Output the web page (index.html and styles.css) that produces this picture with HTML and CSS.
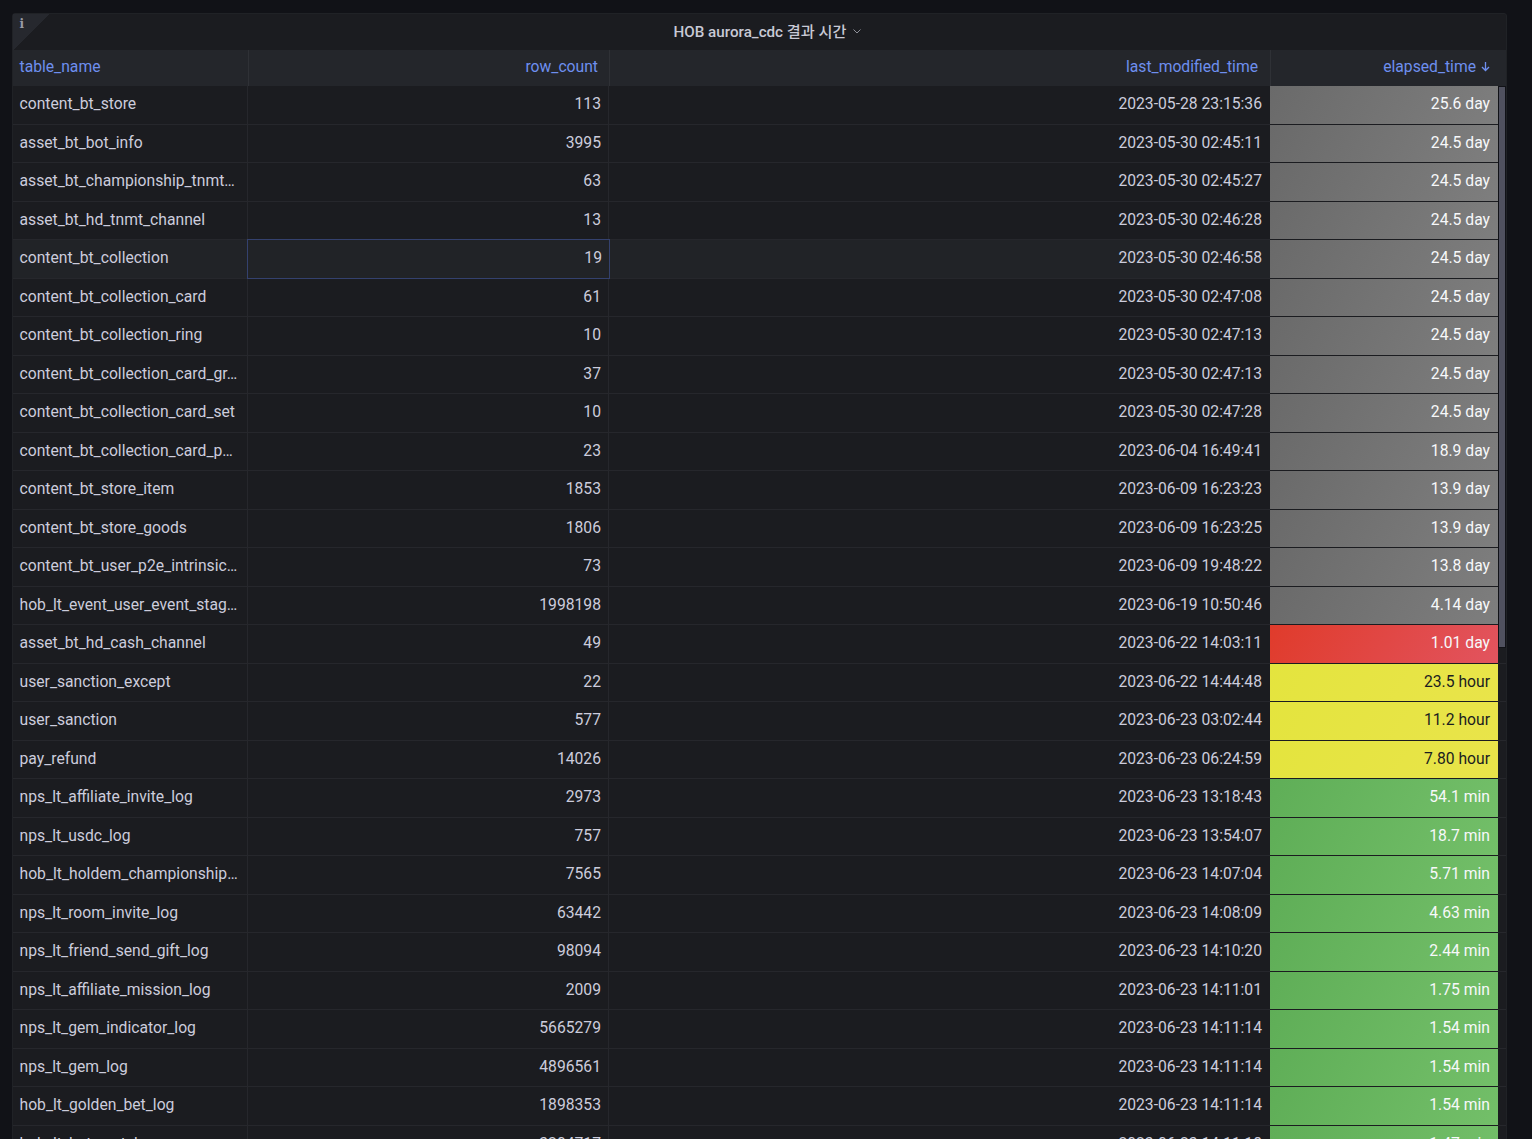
FILE: index.html
```html
<!DOCTYPE html>
<html lang="en">
<head>
  <meta charset="UTF-8" />
  <meta name="viewport" content="width=device-width, initial-scale=1.0"/>
  <title>HOB aurora_cdc 결과 시간</title>
  <link rel="stylesheet" href="styles.css">
</head>
<body>

<div class="panel">
  <div class="panel-title">
    <div class="info-corner"><span class="info-mark">i</span></div>
    <span class="title-text">HOB aurora_cdc 결과 시간</span>
    <svg class="title-caret" width="10" height="10" viewBox="0 0 10 10"><path d="M1.5 3.5 5 7l3.5-3.5" fill="none" stroke="#8e9099" stroke-width="1"/></svg>
  </div>

  <div class="table-wrap">
    <div class="row head">
      <div class="cell">table_name</div>
      <div class="cell num">row_count</div>
      <div class="cell num">last_modified_time</div>
      <div class="cell num">elapsed_time
        <svg class="sort-arrow" width="11" height="11" viewBox="0 0 10 10"><path d="M5 1v7.5M1.8 5.4 5 8.6l3.2-3.2" fill="none" stroke="#6e8fef" stroke-width="1.2"/></svg>
      </div>
    </div>

    <div class="row"><div class="cell">content_bt_store</div><div class="cell num">113</div><div class="cell num">2023-05-28 23:15:36</div><div class="cell num gray">25.6 day</div></div>
    <div class="row"><div class="cell">asset_bt_bot_info</div><div class="cell num">3995</div><div class="cell num">2023-05-30 02:45:11</div><div class="cell num gray">24.5 day</div></div>
    <div class="row"><div class="cell">asset_bt_championship_tnmt…</div><div class="cell num">63</div><div class="cell num">2023-05-30 02:45:27</div><div class="cell num gray">24.5 day</div></div>
    <div class="row"><div class="cell">asset_bt_hd_tnmt_channel</div><div class="cell num">13</div><div class="cell num">2023-05-30 02:46:28</div><div class="cell num gray">24.5 day</div></div>
    <div class="row hovered"><div class="cell">content_bt_collection</div><div class="cell num focused">19</div><div class="cell num">2023-05-30 02:46:58</div><div class="cell num gray">24.5 day</div></div>
    <div class="row"><div class="cell">content_bt_collection_card</div><div class="cell num">61</div><div class="cell num">2023-05-30 02:47:08</div><div class="cell num gray">24.5 day</div></div>
    <div class="row"><div class="cell">content_bt_collection_ring</div><div class="cell num">10</div><div class="cell num">2023-05-30 02:47:13</div><div class="cell num gray">24.5 day</div></div>
    <div class="row"><div class="cell">content_bt_collection_card_gr…</div><div class="cell num">37</div><div class="cell num">2023-05-30 02:47:13</div><div class="cell num gray">24.5 day</div></div>
    <div class="row"><div class="cell">content_bt_collection_card_set</div><div class="cell num">10</div><div class="cell num">2023-05-30 02:47:28</div><div class="cell num gray">24.5 day</div></div>
    <div class="row"><div class="cell">content_bt_collection_card_p…</div><div class="cell num">23</div><div class="cell num">2023-06-04 16:49:41</div><div class="cell num gray">18.9 day</div></div>
    <div class="row"><div class="cell">content_bt_store_item</div><div class="cell num">1853</div><div class="cell num">2023-06-09 16:23:23</div><div class="cell num gray">13.9 day</div></div>
    <div class="row"><div class="cell">content_bt_store_goods</div><div class="cell num">1806</div><div class="cell num">2023-06-09 16:23:25</div><div class="cell num gray">13.9 day</div></div>
    <div class="row"><div class="cell">content_bt_user_p2e_intrinsic…</div><div class="cell num">73</div><div class="cell num">2023-06-09 19:48:22</div><div class="cell num gray">13.8 day</div></div>
    <div class="row"><div class="cell">hob_lt_event_user_event_stag…</div><div class="cell num">1998198</div><div class="cell num">2023-06-19 10:50:46</div><div class="cell num gray">4.14 day</div></div>
    <div class="row"><div class="cell">asset_bt_hd_cash_channel</div><div class="cell num">49</div><div class="cell num">2023-06-22 14:03:11</div><div class="cell num red">1.01 day</div></div>
    <div class="row"><div class="cell">user_sanction_except</div><div class="cell num">22</div><div class="cell num">2023-06-22 14:44:48</div><div class="cell num yellow">23.5 hour</div></div>
    <div class="row"><div class="cell">user_sanction</div><div class="cell num">577</div><div class="cell num">2023-06-23 03:02:44</div><div class="cell num yellow">11.2 hour</div></div>
    <div class="row"><div class="cell">pay_refund</div><div class="cell num">14026</div><div class="cell num">2023-06-23 06:24:59</div><div class="cell num yellow">7.80 hour</div></div>
    <div class="row"><div class="cell">nps_lt_affiliate_invite_log</div><div class="cell num">2973</div><div class="cell num">2023-06-23 13:18:43</div><div class="cell num green">54.1 min</div></div>
    <div class="row"><div class="cell">nps_lt_usdc_log</div><div class="cell num">757</div><div class="cell num">2023-06-23 13:54:07</div><div class="cell num green">18.7 min</div></div>
    <div class="row"><div class="cell">hob_lt_holdem_championship…</div><div class="cell num">7565</div><div class="cell num">2023-06-23 14:07:04</div><div class="cell num green">5.71 min</div></div>
    <div class="row"><div class="cell">nps_lt_room_invite_log</div><div class="cell num">63442</div><div class="cell num">2023-06-23 14:08:09</div><div class="cell num green">4.63 min</div></div>
    <div class="row"><div class="cell">nps_lt_friend_send_gift_log</div><div class="cell num">98094</div><div class="cell num">2023-06-23 14:10:20</div><div class="cell num green">2.44 min</div></div>
    <div class="row"><div class="cell">nps_lt_affiliate_mission_log</div><div class="cell num">2009</div><div class="cell num">2023-06-23 14:11:01</div><div class="cell num green">1.75 min</div></div>
    <div class="row"><div class="cell">nps_lt_gem_indicator_log</div><div class="cell num">5665279</div><div class="cell num">2023-06-23 14:11:14</div><div class="cell num green">1.54 min</div></div>
    <div class="row"><div class="cell">nps_lt_gem_log</div><div class="cell num">4896561</div><div class="cell num">2023-06-23 14:11:14</div><div class="cell num green">1.54 min</div></div>
    <div class="row"><div class="cell">hob_lt_golden_bet_log</div><div class="cell num">1898353</div><div class="cell num">2023-06-23 14:11:14</div><div class="cell num green">1.54 min</div></div>
    <div class="row"><div class="cell">hob_lt_bet_match</div><div class="cell num">3204717</div><div class="cell num">2023-06-23 14:11:18</div><div class="cell num green">1.47 min</div></div>

    <div class="scroll-thumb"></div>
  </div>
</div>

</body>
</html>
```

FILE: styles.css
```css
html, body {
  height: 100%;
}
body {
  margin: 0;
  padding: 13px 25px 0 12px;
  box-sizing: border-box;
  overflow: hidden;
  background-color: #111217;
  color: #ccccdc;
  font-family: Roboto, "Noto Sans CJK KR", sans-serif;
  font-size: 15.7px;
}
.panel {
  height: 1200px;
  background-color: #1b1c20;
  border: 1px solid #202226;
  border-radius: 3px;
  box-sizing: border-box;
}
.panel-title {
  position: relative;
  display: flex;
  justify-content: center;
  align-items: center;
  gap: 6px;
  height: 36px;
  padding: 0 0 5px 17px;
  box-sizing: border-box;
  font-size: 15.2px;
  font-weight: 500;
}
.title-text {
  color: #c8c9d5;
}
.title-caret {
  margin-top: 2px;
}
.info-corner {
  position: absolute;
  top: 0;
  left: 0;
  width: 36px;
  height: 36px;
  background: linear-gradient(135deg, #26282e 50%, transparent 50%);
}
.info-mark {
  position: absolute;
  top: 3px;
  left: 6.5px;
  font-family: "DejaVu Serif", serif;
  font-size: 12px;
  font-weight: 700;
  color: #9a9ca6;
}
.table-wrap {
  position: relative;
}
.row {
  display: grid;
  grid-template-columns: 235px 361px 661px 228px 9px;
  height: 38.5px;
  box-sizing: border-box;
  border-bottom: 1px solid #26272c;
}
.row.head {
  grid-template-columns: 236px 361px 661px 1fr;
  height: 36px;
  background-color: #24262b;
  border-bottom: none;
  color: #6e8fef;
}
.row.head .cell {
  padding-bottom: 4px;
  padding-right: 11px;
  border-right: 1px solid #2f3136;
}
.row.head .cell:nth-child(3) {
  padding-right: 12px;
}
.row.head .cell:last-child {
  padding-right: 15px;
  border-right: none;
}
.row.hovered {
  background-color: #212327;
}
.cell {
  display: flex;
  align-items: center;
  justify-content: flex-start;
  padding: 0 8px 2px 6.5px;
  border-right: 1px solid #26272c;
  white-space: nowrap;
  overflow: hidden;
}
.cell:nth-child(2) {
  padding-right: 7px;
}
.cell:nth-child(3) {
  border-right: none;
}
.num {
  justify-content: flex-end;
}
.sort-arrow {
  margin-left: 4px;
}
.focused {
  outline: 1px solid #34416e;
  border-right: none;
  padding-right: 8px;
}
.gray, .red, .yellow, .green {
  border-right: none;
  margin-bottom: -1px;
  border-bottom: 1px solid #1b1c20;
}
.gray {
  background: linear-gradient(120deg, #6a6a6a, #7e7e7e);
  color: #f7f8fa;
}
.red {
  background: linear-gradient(120deg, #e03b2b, #e2545f);
  color: #f7f8fa;
}
.yellow {
  background: linear-gradient(120deg, #e4e43e, #e9e44a);
  color: #1b1c20;
}
.green {
  background: linear-gradient(120deg, #5fae57, #73bf69);
  color: #f7f8fa;
}
.scroll-thumb {
  position: absolute;
  top: 36px;
  right: 0;
  width: 8px;
  height: 562px;
  background-color: #50515f;
  border: 1px solid #111217;
  box-sizing: border-box;
}
```
